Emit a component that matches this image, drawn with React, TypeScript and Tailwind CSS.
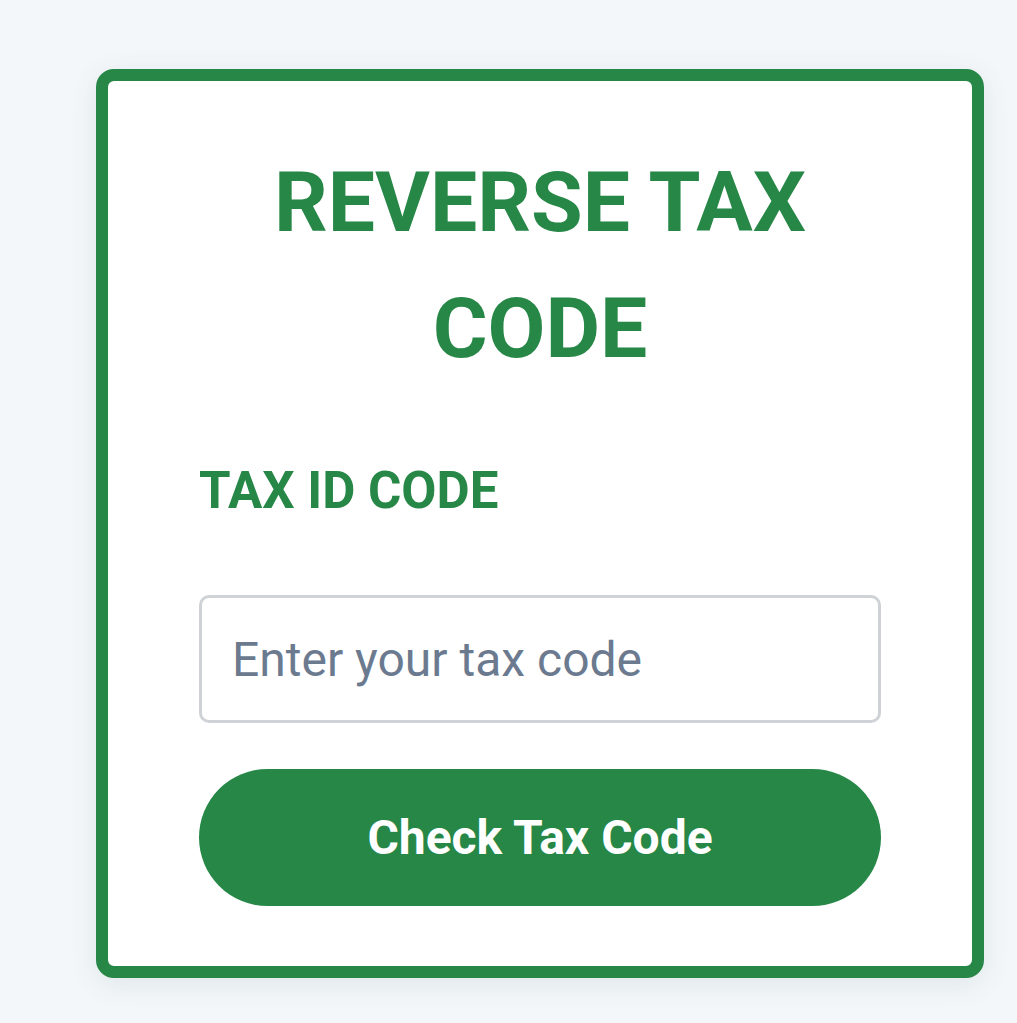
export default function App() {
  return (
    <div
      className="min-h-screen w-full bg-[#f3f7f9] pl-[96px] pt-[69px]"
      style={{ fontFamily: 'Roboto, "Liberation Sans", sans-serif' }}
    >
      <div className="w-[888px] h-[909px] rounded-[18px] border-[12px] border-[#268747] bg-white shadow-[0_6px_28px_rgba(60,80,90,0.10)] px-[91px] pt-[59px] flex flex-col">
        <h1 className="text-center text-[84px] leading-[126px] font-bold text-[#268747]">
          REVERSE TAX CODE
        </h1>
        <label className="mt-[62px] text-[51px] leading-[73px] font-bold text-[#268747]">
          TAX ID CODE
        </label>
        <input
          type="text"
          placeholder="Enter your tax code"
          className="mt-[68px] h-[128px] w-full rounded-[10px] border-[3px] border-[#cfd2d6] bg-white px-[30px] text-[48px] text-[#334155] placeholder:text-[#6b7a8f] outline-none"
        />
        <button className="mt-[46px] h-[137px] w-full rounded-full bg-[#268747] text-[48px] font-bold text-white">
          Check Tax Code
        </button>
      </div>
    </div>
  );
}
